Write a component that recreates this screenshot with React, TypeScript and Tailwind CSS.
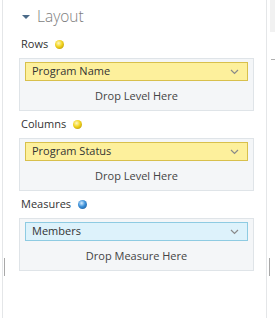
import React from 'react';

const SECTIONS = [
  { label: 'Rows', dot: 'yellow', field: 'Program Name', drop: 'Drop Level Here' },
  { label: 'Columns', dot: 'yellow', field: 'Program Status', drop: 'Drop Level Here' },
  { label: 'Measures', dot: 'blue', field: 'Members', drop: 'Drop Measure Here' },
];

function Dot({ color }: { color: string }) {
  const bg =
    color === 'yellow'
      ? 'bg-[radial-gradient(circle_at_40%_35%,#fff8c0_0%,#f2d41e_45%,#a88400_100%)]'
      : 'bg-[radial-gradient(circle_at_40%_35%,#d4ecff_0%,#3a8fd8_45%,#1a4f8a_100%)]';
  return <span className={`inline-block w-[9px] h-[9px] rounded-full ${bg}`} />;
}

function Chevron() {
  return (
    <svg width="9" height="6" viewBox="0 0 9 6" fill="none" stroke="#8a8a8a" strokeWidth={1.2}>
      <path d="M1 1l3.5 3.5L8 1" />
    </svg>
  );
}

export default function App(): React.JSX.Element {
  return (
    <div
      className="relative w-[275px] h-[318px] bg-white flex overflow-hidden"
      style={{ fontFamily: '"Open Sans", "Noto Sans", sans-serif' }}
    >
      <div className="w-[2px]" />
      <div className="w-px bg-[#e4e6e8]" />

      {/* Layout panel */}
      <div className="flex-1 flex flex-col pt-[7px] pl-[16px] pr-[12px]">
        <div className="h-[20px] flex items-center">
          <span className="ml-[3px] w-0 h-0 border-l-[4px] border-r-[4px] border-t-[4px] border-l-transparent border-r-transparent border-t-[#4b6a88]" />
          <span className="ml-[7px] text-[15.5px] font-light text-[#7d7d7d] leading-none">Layout</span>
        </div>

        <div className="mt-[9px] flex flex-col">
          {SECTIONS.map((s) => (
            <div key={s.label} className="flex flex-col mb-[5px]">
              <div className="h-[16px] flex items-center gap-[7px] pl-[2px] text-[11px] text-[#333]">
                <span>{s.label}</span>
                <Dot color={s.dot} />
              </div>
              <div className="mt-[6px] h-[53px] border border-[#dfe4e8] bg-[#f4f6f8] px-[5px] pt-[3px] flex flex-col">
                <div
                  className={`h-[19px] flex items-center justify-between pl-[6px] pr-[8px] border text-[11px] text-[#333] ${
                    s.dot === 'yellow' ? 'bg-[#fdf09c] border-[#d8c04c]' : 'bg-[#ddf2fb] border-[#8ecbe2]'
                  }`}
                >
                  <span>{s.field}</span>
                  <Chevron />
                </div>
                <div className="mt-[7px] h-[16px] flex items-center justify-center text-[11px] text-[#444]">
                  {s.drop}
                </div>
              </div>
            </div>
          ))}
        </div>
      </div>

      <div className="w-px bg-[#e4e6e8]" />
      <div className="w-[8px] flex flex-col">
        <div className="ml-[3px] h-[32px] bg-[#f1f1f1]" />
        <div className="ml-[4px] mt-[27px] h-px bg-[#b0b0b0]" />
      </div>

      {/* resize grips */}
      <div className="absolute left-[4px] top-[258px] w-[1px] h-[18px] bg-[#a8a8a8]" />
      <div className="absolute left-[269px] top-[258px] w-[1px] h-[18px] bg-[#a8a8a8]" />
    </div>
  );
}
